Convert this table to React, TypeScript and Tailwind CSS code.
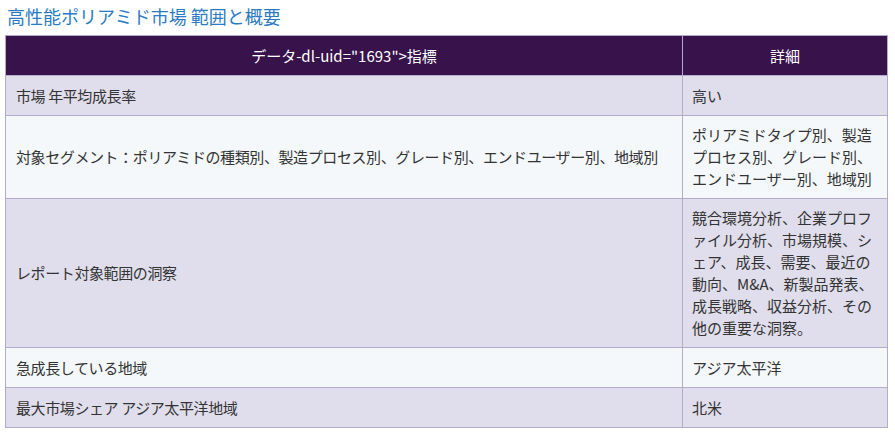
const rows: { label: string; detail: string[] }[] = [
  { label: "市場 年平均成長率", detail: ["高い"] },
  {
    label: "対象セグメント：ポリアミドの種類別、製造プロセス別、グレード別、エンドユーザー別、地域別",
    detail: ["ポリアミドタイプ別、製造", "プロセス別、グレード別、", "エンドユーザー別、地域別"],
  },
  {
    label: "レポート対象範囲の洞察",
    detail: [
      "競合環境分析、企業プロフ",
      "ァイル分析、市場規模、シ",
      "ェア、成長、需要、最近の",
      "動向、M&A、新製品発表、",
      "成長戦略、収益分析、その",
      "他の重要な洞察。",
    ],
  },
  { label: "急成長している地域", detail: ["アジア太平洋"] },
  { label: "最大市場シェア アジア太平洋地域", detail: ["北米"] },
];

const font = { fontFamily: '"Noto Sans CJK JP", "Noto Sans", sans-serif' };

export default function App() {
  return (
    <div className="w-[895px] h-[436px] bg-white overflow-hidden" style={font}>
      <h2 className="pl-[7px] pt-[4px] text-[18px] leading-[24px] text-[#2b7bc4] font-normal">
        高性能ポリアミド市場 範囲と概要
      </h2>
      <table className="ml-[5px] mt-[7px] w-[883px] border-collapse text-[15px] leading-[22px] text-[#333]">
        <thead>
          <tr className="bg-[#38124a] text-white">
            <th className="w-[677px] h-[40px] border border-[#b3abc9] font-normal text-center">
              データ-dl-uid="1693"&gt;指標
            </th>
            <th className="h-[40px] border border-[#b3abc9] font-normal text-center">詳細</th>
          </tr>
        </thead>
        <tbody>
          {rows.map((r, i) => (
            <tr key={i} className={i % 2 === 0 ? "bg-[#e0deec]" : "bg-[#f4f8fb]"}>
              <td className="h-[40px] border border-[#b3abc9] px-[10px] py-[8px] align-middle whitespace-nowrap tracking-[-0.4px]">
                {r.label}
              </td>
              <td className="h-[40px] border border-[#b3abc9] px-[9px] py-[8px] align-middle">
                {r.detail.map((d, j) => (
                  <div key={j} className="whitespace-nowrap">{d}</div>
                ))}
              </td>
            </tr>
          ))}
        </tbody>
      </table>
    </div>
  );
}
